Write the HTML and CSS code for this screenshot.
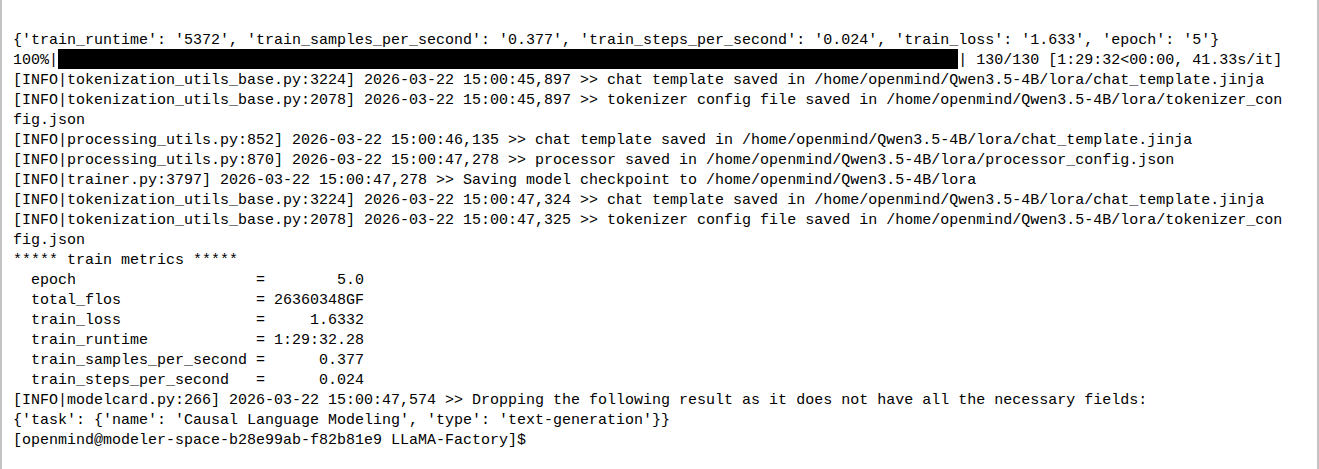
FILE: index.html
```html
<!DOCTYPE html>
<html>
<head>
<meta charset="utf-8">
<link rel="stylesheet" href="styles.css">
</head>
<body>
<div class="terminal">
<pre class="output">{'train_runtime': '5372', 'train_samples_per_second': '0.377', 'train_steps_per_second': '0.024', 'train_loss': '1.633', 'epoch': '5'}
100%|<span class="bar"></span>| 130/130 [1:29:32&lt;00:00, 41.33s/it]
[INFO|tokenization_utils_base.py:3224] 2026-03-22 15:00:45,897 &gt;&gt; chat template saved in /home/openmind/Qwen3.5-4B/lora/chat_template.jinja
[INFO|tokenization_utils_base.py:2078] 2026-03-22 15:00:45,897 &gt;&gt; tokenizer config file saved in /home/openmind/Qwen3.5-4B/lora/tokenizer_con
fig.json
[INFO|processing_utils.py:852] 2026-03-22 15:00:46,135 &gt;&gt; chat template saved in /home/openmind/Qwen3.5-4B/lora/chat_template.jinja
[INFO|processing_utils.py:870] 2026-03-22 15:00:47,278 &gt;&gt; processor saved in /home/openmind/Qwen3.5-4B/lora/processor_config.json
[INFO|trainer.py:3797] 2026-03-22 15:00:47,278 &gt;&gt; Saving model checkpoint to /home/openmind/Qwen3.5-4B/lora
[INFO|tokenization_utils_base.py:3224] 2026-03-22 15:00:47,324 &gt;&gt; chat template saved in /home/openmind/Qwen3.5-4B/lora/chat_template.jinja
[INFO|tokenization_utils_base.py:2078] 2026-03-22 15:00:47,325 &gt;&gt; tokenizer config file saved in /home/openmind/Qwen3.5-4B/lora/tokenizer_con
fig.json
***** train metrics *****
  epoch                    =        5.0
  total_flos               = 26360348GF
  train_loss               =     1.6332
  train_runtime            = 1:29:32.28
  train_samples_per_second =      0.377
  train_steps_per_second   =      0.024
[INFO|modelcard.py:266] 2026-03-22 15:00:47,574 &gt;&gt; Dropping the following result as it does not have all the necessary fields:
{'task': {'name': 'Causal Language Modeling', 'type': 'text-generation'}}
[openmind@modeler-space-b28e99ab-f82b81e9 LLaMA-Factory]$</pre>
</div>
</body>
</html>
```
FILE: styles.css
```css
html, body {
  margin: 0;
  padding: 0;
  background: #ffffff;
}

.terminal {
  box-sizing: border-box;
  width: 1319px;
  height: 469px;
  border-left: 2px solid #c3c3c3;
  border-right: 2px solid #c3c3c3;
  padding: 31px 0 0 11px;
  background: #ffffff;
  overflow: hidden;
}

.output {
  margin: 0;
  font-family: "Liberation Mono", "Courier New", monospace;
  font-size: 15px;
  line-height: 20px;
  color: #000000;
  white-space: pre;
}

.bar {
  display: inline-block;
  width: 100ch;
  height: 20px;
  margin-top: -2px;
  background: #000000;
  vertical-align: top;
}
```
